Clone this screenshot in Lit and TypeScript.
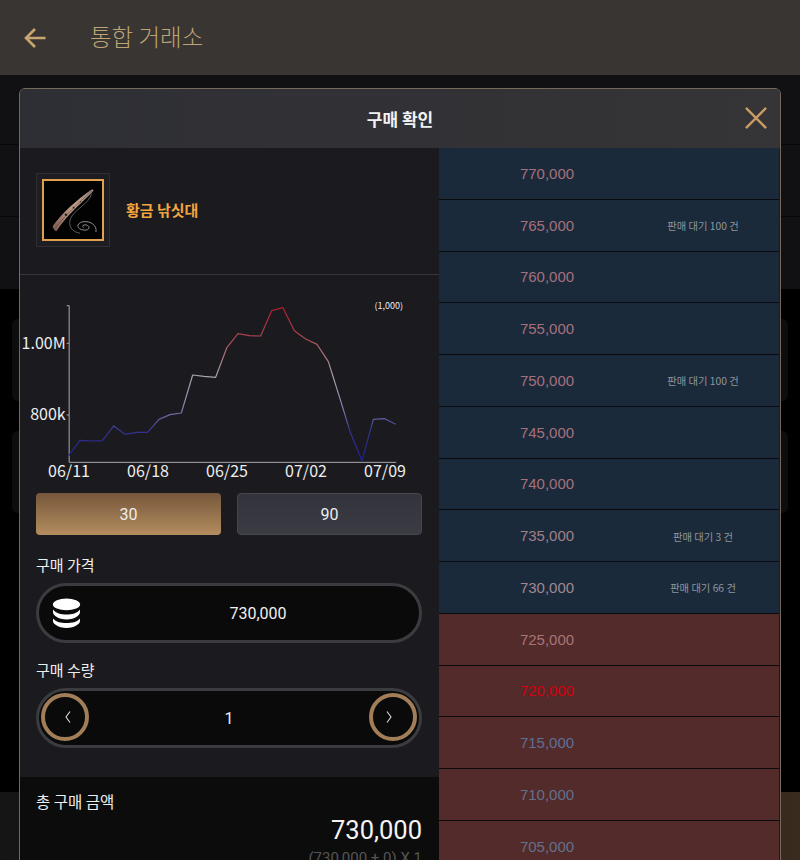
import { LitElement, html, css, svg } from "lit";
import { customElement } from "lit/decorators.js";

const POINTS: [number, number][] = [
  [206, 497], [240, 451], [273, 453], [307, 452], [341, 408], [375, 433], [409, 427], [443, 427],
  [477, 388], [510, 374], [544, 369], [578, 255], [612, 259], [647, 262], [681, 172], [714, 131],
  [748, 137], [782, 138], [815, 62], [849, 53], [883, 122], [917, 147], [951, 163], [985, 215],
  [1019, 323], [1052, 430], [1086, 512], [1120, 388], [1154, 386], [1187, 403],
];

interface Row { price: string; color: string; note?: string; kind: "ask" | "bid"; }

const ROWS: Row[] = [
  { price: "770,000", color: "#a5707c", kind: "ask" },
  { price: "765,000", color: "#a5707c", kind: "ask", note: "판매 대기 100 건" },
  { price: "760,000", color: "#a5707c", kind: "ask" },
  { price: "755,000", color: "#a5707c", kind: "ask" },
  { price: "750,000", color: "#a5707c", kind: "ask", note: "판매 대기 100 건" },
  { price: "745,000", color: "#a5707c", kind: "ask" },
  { price: "740,000", color: "#a5707c", kind: "ask" },
  { price: "735,000", color: "#a08088", kind: "ask", note: "판매 대기 3 건" },
  { price: "730,000", color: "#a08890", kind: "ask", note: "판매 대기 66 건" },
  { price: "725,000", color: "#a87478", kind: "bid" },
  { price: "720,000", color: "#d5000f", kind: "bid" },
  { price: "715,000", color: "#5f7096", kind: "bid" },
  { price: "710,000", color: "#66708a", kind: "bid" },
  { price: "705,000", color: "#66708a", kind: "bid" },
];

@customElement("app-root")
export class AppRoot extends LitElement {
  static styles = css`
    :host {
      display: block;
      position: relative;
      width: 800px;
      height: 860px;
      overflow: hidden;
      background: #000;
      font-family: "Noto Sans CJK KR", "Noto Sans", sans-serif;
      color: #fff;
    }
    .page { display: flex; flex-direction: column; height: 860px; }
    .topbar {
      height: 75px; flex: none; background: #393532; display: flex; align-items: center;
      padding-left: 24px; gap: 44px; box-sizing: border-box;
    }
    .topbar svg { width: 22px; height: 22px; display: block; }
    .topbar h1 { margin: 0 0 2px; font-size: 23.5px; font-weight: 300; color: #bca474; line-height: 1; }
    .band { height: 71px; flex: none; background: #111113; border-bottom: 1px solid #08080a; }
    .band.first { height: 69px; }
    .band.last { height: 72px; border: 0; }
    .cards { flex: 1; display: flex; flex-direction: column; gap: 30px; padding: 30px 12px 0; }
    .card { height: 82px; background: #0d0d0d; border-radius: 6px; flex: none; }
    .foot {
      height: 68px; flex: none; margin-top: auto;
      background: linear-gradient(90deg, #151516 0%, #1a1816 50%, #3a2b1f 100%);
    }

    .modal {
      position: absolute; left: 19px; top: 88px; width: 762px; height: 790px;
      box-sizing: border-box; border: 1px solid #77685c; border-radius: 6px 6px 0 0;
      overflow: hidden; background: #1b1b1f; display: flex; flex-direction: column;
    }
    .mhead {
      height: 59px; flex: none; position: relative; display: flex; align-items: center; justify-content: center;
      background: linear-gradient(90deg, #2e2f35, #353436);
      font-size: 17px; font-weight: 700; color: #f2f2f2;
    }
    .close { position: absolute; right: 13px; top: 18px; width: 22px; height: 22px; display: block; }
    .mbody { flex: 1; display: grid; grid-template-columns: 419px 340px; min-height: 0; }
    .left { display: flex; flex-direction: column; min-width: 0; }
    .item {
      height: 127px; flex: none; box-sizing: border-box; border-bottom: 1px solid #36363a;
      display: flex; align-items: center; gap: 16px; padding: 0 16px 2px;
    }
    .slot {
      width: 74px; height: 74px; box-sizing: border-box; border: 1px solid #2e2e33; background: #1e1e22;
      display: flex; align-items: center; justify-content: center; flex: none;
    }
    .slot-in { width: 62px; height: 62px; box-sizing: border-box; border: 2px solid #e0a050; background: #020202; }
    .slot-in svg { display: block; width: 100%; height: 100%; }
    .name { font-size: 15px; font-weight: 700; color: #f3a540; padding-bottom: 2px; }
    .chart { padding-top: 15px; flex: none; }
    .chart svg { display: block; width: 418px; height: 200px; }
    .chart text { fill: #eee; font-family: "Noto Sans CJK KR", "Noto Sans", sans-serif; font-size: 48px; }
    .chart text.unit { font-size: 27px; }
    .tabs { display: grid; grid-template-columns: 1fr 1fr; gap: 16px; padding: 3px 17px 0 16px; flex: none; }
    .tab {
      height: 42px; box-sizing: border-box; border-radius: 4px; display: flex; align-items: center; justify-content: center;
      font-family: Roboto, sans-serif; font-size: 16px; color: #eee;
    }
    .tab.on { background: linear-gradient(180deg, #76573c, #b48d5e); }
    .tab.off { background: linear-gradient(180deg, #33333b, #3b3b43); border: 1px solid #46464e; }
    .label { font-size: 15px; line-height: 20px; color: #eee; padding: 0 16px; flex: none; }
    .pill {
      margin: 0 17px 0 16px; height: 60px; box-sizing: border-box; flex: none; border: 3px solid #3b3c40; border-radius: 30px; background: #0a0a0b;
      position: relative; display: flex; align-items: center; justify-content: center;
      font-family: Roboto, sans-serif; font-size: 16px; color: #f0f0f0;
    }
    .l1 { margin-top: 20px; margin-bottom: 8px; }
    .l2 { margin-top: 17px; margin-bottom: 8px; }
    .coins { position: absolute; left: 13px; top: 11px; width: 29px; height: 33px; }
    .price { padding-left: 58px; }
    .step {
      position: absolute; top: 2px; width: 48px; height: 48px; box-sizing: border-box;
      border: 4px solid #a27e58; border-radius: 50%; background: #0a0a0b;
      display: flex; align-items: center; justify-content: center;
    }
    .step svg { width: 8px; height: 14px; display: block; }
    .step.prev { left: 2px; }
    .step.prev svg { margin-left: 6px; }
    .step.next { right: 2px; }
    .step.next svg { margin-right: 8px; }
    .total { margin-top: 29px; flex: 1; background: #0c0c0d; padding: 13px 17px 0 16px; }
    .total .t { font-size: 15.500px; line-height: 22px; color: #eee; }
    .total .v { text-align: right; font-family: Roboto, sans-serif; font-size: 25.500px; line-height: 30px; margin-top: 3px; color: #f4f4f4; }
    .total .s { text-align: right; font-family: Roboto, sans-serif; font-size: 15px; line-height: 20px; margin-top: 3px; color: #555; }

    .right { background: #0b0b0d; min-width: 0; }
    .row {
      height: 51.75px; box-sizing: border-box; border-bottom: 1.5px solid #0b0b0d;
      display: grid; grid-template-columns: 216px 96px 1fr; align-items: center;
    }
    .row.ask { background: #1b2a3a; }
    .row.bid { background: #522b2a; }
    .p { text-align: center; font-family: "Liberation Sans", sans-serif; font-size: 15px; }
    .n { text-align: center; white-space: nowrap; font-size: 10.300px; color: #8f969e; padding-top: 1px; }
  `;

  private chart() {
    const pts = POINTS.map((p) => p.join(",")).join(" ");
    return svg`
      <svg viewBox="60 0 1254 600" aria-hidden="true">
        <defs>
          <linearGradient id="ln" gradientUnits="userSpaceOnUse" x1="0" y1="50" x2="0" y2="515">
            <stop offset="0" stop-color="#b01a2e"/>
            <stop offset="0.2" stop-color="#a84650"/>
            <stop offset="0.45" stop-color="#a9a4a6"/>
            <stop offset="0.66" stop-color="#7f7fb0"/>
            <stop offset="0.8" stop-color="#33338f"/>
            <stop offset="1" stop-color="#1d1d94"/>
          </linearGradient>
        </defs>
        <path d="M200 47H207.500V517H1189M200 160H207M200 375H207" fill="none" stroke="#a9a9ab" stroke-width="3"/>
        <polyline points=${pts} fill="none" stroke="url(#ln)" stroke-width="3.600" stroke-linejoin="round"/>
        <text x="197" y="176" text-anchor="end">1.00M</text>
        <text x="197" y="391" text-anchor="end">800k</text>
        <text x="207" y="562" text-anchor="middle">06/11</text>
        <text x="444" y="562" text-anchor="middle">06/18</text>
        <text x="681" y="562" text-anchor="middle">06/25</text>
        <text x="918" y="562" text-anchor="middle">07/02</text>
        <text x="1155" y="562" text-anchor="middle">07/09</text>
        <text class="unit" x="1166" y="56" text-anchor="middle">(1,000)</text>
      </svg>`;
  }

  private rod() {
    return svg`
      <svg viewBox="38 44 180 182" aria-hidden="true">
        <defs>
          <linearGradient id="rd" x1="0" y1="1" x2="1" y2="0">
            <stop offset="0" stop-color="#7a5a4c"/>
            <stop offset="0.55" stop-color="#c09c8a"/>
            <stop offset="1" stop-color="#a08c84"/>
          </linearGradient>
        </defs>
        <path d="M64 186C92 146 136 106 188 70L193 73C172 100 116 140 76 202C72 200 66 196 64 186Z" fill="url(#rd)"/>
        <path d="M72 192C104 152 140 118 188 74" fill="none" stroke="#4a3028" stroke-width="1.600"/>
        <circle cx="106" cy="150" r="5.500" fill="#2e221e" stroke="#c4a694" stroke-width="1.800"/>
        <circle cx="130" cy="128" r="4" fill="#2e221e" stroke="#c4a694" stroke-width="1.600"/>
        <circle cx="152" cy="109" r="3" fill="#2e221e" stroke="#c4a694" stroke-width="1.400"/>
        <path d="M186 84C182 112 132 134 120 162C112 184 124 204 150 208" fill="none" stroke="#8a8e8c" stroke-width="2"/>
        <path d="M200 204C204 184 184 168 158 172C136 178 140 196 162 198C180 200 184 186 170 182C160 180 154 186 162 190" fill="none" stroke="#a4a8a6" stroke-width="2.600"/>
      </svg>`;
  }

  render() {
    return html`
      <div class="page">
        <header class="topbar">
          <svg viewBox="0 0 22 22" aria-hidden="true">
            <path d="M21.500 11H2M11 2L2 11L11 20" fill="none" stroke="#c9a66f" stroke-width="2.600"/>
          </svg>
          <h1>통합 거래소</h1>
        </header>
        <div class="band first"></div>
        <div class="band"></div>
        <div class="band last"></div>
        <div class="cards">
          <div class="card"></div>
          <div class="card"></div>
        </div>
        <div class="foot"></div>
      </div>

      <section class="modal">
        <div class="mhead">
          구매 확인
          <svg class="close" viewBox="0 0 24 24" aria-hidden="true">
            <path d="M1 1L23 23M23 1L1 23" stroke="#c99a63" stroke-width="2.600" fill="none"/>
          </svg>
        </div>
        <div class="mbody">
          <div class="left">
            <div class="item">
              <div class="slot"><div class="slot-in">${this.rod()}</div></div>
              <div class="name">황금 낚싯대</div>
            </div>
            <div class="chart">${this.chart()}</div>
            <div class="tabs">
              <div class="tab on">30</div>
              <div class="tab off">90</div>
            </div>
            <div class="label l1">구매 가격</div>
            <div class="pill">
              <svg class="coins" viewBox="0 0 32 34" aria-hidden="true">
                <ellipse cx="16" cy="7" rx="15" ry="6.500" fill="#fff"/>
                <path d="M1.500 12.500C4 17 10 18 16 18S28 17 30.500 12.500C31.500 15 31 18 28 20C25 22.500 20 23.500 16 23.500S7 22.500 4 20C1 18 .5 15 1.500 12.500Z" fill="#fff"/>
                <path d="M1.500 22.500C4 26.500 10 27.500 16 27.500S28 26.500 30.500 22.500C31.500 25 31 28 28 29.500C25 32 20 33 16 33S7 32 4 29.500C1 28 .5 25 1.500 22.500Z" fill="#fff"/>
              </svg>
              <span class="price">730,000</span>
            </div>
            <div class="label l2">구매 수량</div>
            <div class="pill">
              <div class="step prev">
                <svg viewBox="0 0 8 14" aria-hidden="true"><path d="M6 1.500L2 7L6 12.500" fill="none" stroke="#ddd" stroke-width="1.100"/></svg>
              </div>
              <span>1</span>
              <div class="step next">
                <svg viewBox="0 0 8 14" aria-hidden="true"><path d="M2 1.500L6 7L2 12.500" fill="none" stroke="#ddd" stroke-width="1.100"/></svg>
              </div>
            </div>
            <div class="total">
              <div class="t">총 구매 금액</div>
              <div class="v">730,000</div>
              <div class="s">(730,000 + 0) X 1</div>
            </div>
          </div>
          <div class="right">
            ${ROWS.map(
              (r) => html`
                <div class="row ${r.kind}">
                  <div class="p" style="color:${r.color}">${r.price}</div>
                  <div class="n">${r.note ?? ""}</div>
                </div>
              `
            )}
          </div>
        </div>
      </section>
    `;
  }
}
